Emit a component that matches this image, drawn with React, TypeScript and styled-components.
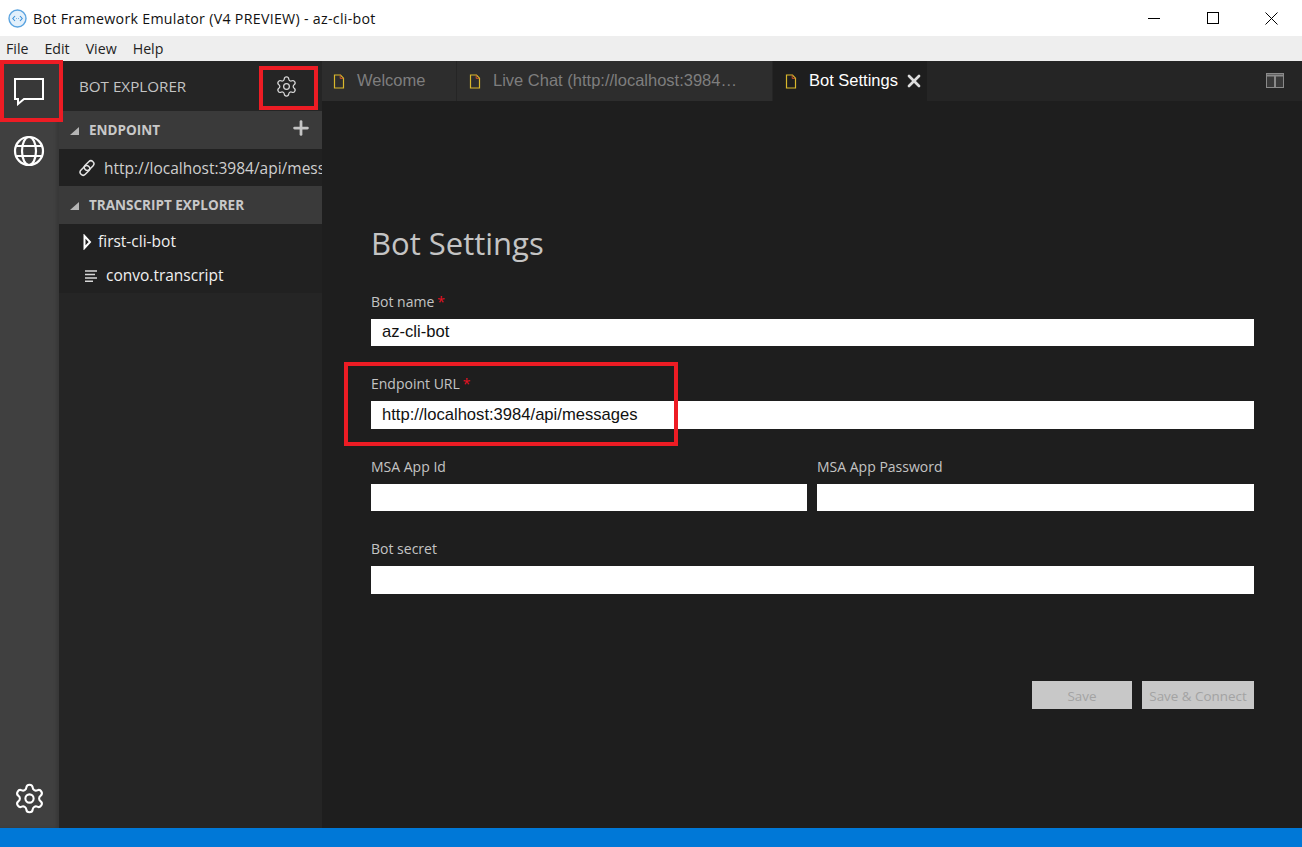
import { Settings, Plus, X } from "lucide-react";
import styled, { createGlobalStyle } from "styled-components";

const Global = createGlobalStyle`
  html, body { margin: 0; padding: 0; background: #1e1e1e; }
  * { box-sizing: border-box; }
`;

const UI_FONT = `"Open Sans", "Noto Sans", sans-serif`;
const ARIAL = `"Liberation Sans", Arial, sans-serif`;

const Window = styled.div`
  width: 1302px;
  height: 847px;
  display: flex;
  flex-direction: column;
  overflow: hidden;
  position: relative;
  font-family: ${UI_FONT};
`;

const TitleBar = styled.div`
  height: 36px;
  background: #fff;
  display: flex;
  align-items: center;
  padding: 0 1px 0 8px;
  color: #111;
  font-size: 14.2px;
  letter-spacing: 0.3px;
`;

const TitleText = styled.span`
  margin-left: 6px;
  flex: 1;
`;

const WinButton = styled.div`
  width: 59px;
  height: 36px;
  display: flex;
  align-items: center;
  justify-content: center;
`;

const MenuBar = styled.div`
  height: 25px;
  background: #eeeeee;
  display: flex;
  align-items: center;
  padding-left: 6px;
  gap: 16px;
  font-size: 14.2px;
  color: #222;
`;

const Body = styled.div`
  flex: 1;
  display: flex;
  min-height: 0;
`;

const NavBar = styled.div`
  width: 59px;
  background: #404040;
  box-shadow: inset -3px 0 3px rgba(0, 0, 0, 0.12);
  display: flex;
  flex-direction: column;
  align-items: stretch;
`;

const NavItem = styled.div<{ $active?: boolean }>`
  height: 60px;
  padding-right: 1px;
  display: flex;
  align-items: center;
  justify-content: center;
  background: ${(x) => (x.$active ? "#383838" : "transparent")};
  color: #fff;
`;

const NavSpacer = styled.div`
  flex: 1;
`;

const Explorer = styled.div`
  width: 263px;
  background: #252525;
  display: flex;
  flex-direction: column;
  overflow: hidden;
`;

const ExplorerHead = styled.div`
  height: 50px;
  flex: none;
  background: #252525;
  display: flex;
  align-items: center;
  justify-content: space-between;
  padding: 0 24px 0 20px;
  color: #c4c4c4;
  font-size: 15.2px;
`;

const SectionHead = styled.div`
  height: 38px;
  flex: none;
  background: #3a3a3a;
  display: flex;
  align-items: center;
  padding: 0 11px;
  color: #c8c8c8;
  font-size: 13.5px;
  font-weight: 700;
  text-transform: uppercase;
`;

const Caret = styled.span`
  width: 0;
  height: 0;
  margin: 2px 10px 0 0;
  border-style: solid;
  border-width: 0 0 8px 9px;
  border-color: transparent transparent #b5b5b5 transparent;
`;

const SectionName = styled.span`
  flex: 1;
  margin-top: -1px;
`;

const Row = styled.div<{ $indent: number; $height: number; $color: string }>`
  height: ${(x) => x.$height}px;
  flex: none;
  background: #212121;
  display: flex;
  align-items: center;
  padding-left: ${(x) => x.$indent}px;
  color: ${(x) => x.$color};
  font-size: 15.5px;
  white-space: nowrap;
`;

const RowLabel = styled.span<{ $lift: number }>`
  margin-top: -${(x) => x.$lift}px;
`;

const RowIcon = styled.svg<{ $gap: number }>`
  flex: none;
  margin-right: ${(x) => x.$gap}px;
`;

const Main = styled.div`
  flex: 1;
  background: #1e1e1e;
  display: flex;
  flex-direction: column;
  min-width: 0;
`;

const TabBar = styled.div`
  height: 40px;
  background: #252525;
  display: flex;
  align-items: stretch;
`;

const Tab = styled.div<{ $active?: boolean; $width: number; $pad: number }>`
  width: ${(x) => x.$width}px;
  background: ${(x) => (x.$active ? "#1e1e1e" : "#2d2d2d")};
  border-right: 1px solid #252525;
  display: flex;
  align-items: center;
  padding-left: ${(x) => x.$pad}px;
  gap: 12px;
  color: ${(x) => (x.$active ? "#fff" : "#7e7e7e")};
  font-family: ${ARIAL};
  font-size: 16.5px;
  white-space: nowrap;
`;

const TabText = styled.span`
  margin-top: -2px;
`;

const TabClose = styled(X)`
  flex: none;
  margin-left: -6px;
`;

const TabSpacer = styled.div`
  flex: 1;
`;

const SplitButton = styled.div`
  width: 54px;
  display: flex;
  align-items: center;
  justify-content: center;
`;

const Form = styled.div`
  flex: 1;
  padding: 120.5px 48px 0 49px;
  display: flex;
  flex-direction: column;
`;

const Heading = styled.h1`
  margin: 0 0 27px;
  height: 43px;
  line-height: 43px;
  font-size: 31px;
  font-weight: 400;
  color: #c4c4c4;
`;

const Field = styled.div`
  display: flex;
  flex-direction: column;
  min-width: 0;
  margin-bottom: 28px;
`;

const Label = styled.label`
  height: 20px;
  line-height: 20px;
  margin-bottom: 7px;
  font-size: 14px;
  color: #c4c4c4;
`;

const Star = styled.span`
  color: #e81123;
  margin-left: 3px;
`;

const Input = styled.input`
  height: 27.5px;
  width: 100%;
  padding: 0 11px;
  border: none;
  outline: none;
  border-radius: 0;
  background: #fff;
  color: #111;
  font-family: ${ARIAL};
  font-size: 16.6px;
`;

const Pair = styled.div`
  display: grid;
  grid-template-columns: 436px 1fr;
  gap: 10px;
`;

const Actions = styled.div`
  margin-top: 59.5px;
  display: flex;
  justify-content: flex-end;
  gap: 10px;
`;

const FormButton = styled.button<{ $width: number }>`
  width: ${(x) => x.$width}px;
  height: 28px;
  padding: 1px 0 0;
  border: none;
  background: #c8c8c8;
  color: #a3a3a3;
  font-family: ${UI_FONT};
  font-size: 13.4px;
`;

const StatusBar = styled.div`
  height: 19px;
  flex: none;
  background: #0078d7;
`;

const Callout = styled.div<{ $l: number; $t: number; $w: number; $h: number }>`
  position: absolute;
  left: ${(x) => x.$l}px;
  top: ${(x) => x.$t}px;
  width: ${(x) => x.$w}px;
  height: ${(x) => x.$h}px;
  border: 4px solid #ed1c24;
  pointer-events: none;
`;

const AppLogo = () => (
  <svg width="19" height="19" viewBox="0 0 19 19" fill="none">
    <circle cx="9.5" cy="9.5" r="8.5" fill="#e3f0fb" stroke="#5ba4e0" strokeWidth="1.4" />
    <path d="M7 7 4.800 9.500 7 12M12 7l2.200 2.500L12 12" stroke="#3a8fd8" strokeWidth="1.1" />
    <path d="M8.400 9.500h.6M10 9.500h.6" stroke="#3a8fd8" strokeWidth="1.1" />
  </svg>
);

const FileIcon = () => (
  <svg width="12" height="15" viewBox="0 0 12 15" fill="none" style={{ flex: "none" }}>
    <path d="M1.500 1h6l3 3.200V14h-9z" stroke="#d9b82c" strokeWidth="1.2" />
    <path d="M7.200 1.200v3.200h3" stroke="#c9562c" strokeWidth="1" />
  </svg>
);

const fields = { bot: "az-cli-bot", url: "http://localhost:3984/api/messages" };

export default function App() {
  return (
    <Window>
      <Global />
      <TitleBar>
        <AppLogo />
        <TitleText>Bot Framework Emulator (V4 PREVIEW) - az-cli-bot</TitleText>
        <WinButton>
          <svg width="12" height="12" viewBox="0 0 12 12"><path d="M0 6.500h12" stroke="#000" /></svg>
        </WinButton>
        <WinButton>
          <svg width="12" height="12" viewBox="0 0 12 12"><rect x=".5" y=".5" width="11" height="11" fill="none" stroke="#000" /></svg>
        </WinButton>
        <WinButton>
          <svg width="13" height="13" viewBox="0 0 13 13"><path d="M.5.5l12 12M12.500.5l-12 12" stroke="#000" /></svg>
        </WinButton>
      </TitleBar>
      <MenuBar>
        <span>File</span>
        <span>Edit</span>
        <span>View</span>
        <span>Help</span>
      </MenuBar>
      <Body>
        <NavBar>
          <NavItem $active>
            <svg width="32" height="30" viewBox="0 0 32 30" fill="none">
              <path d="M2 3h28v20H11l-6 5v-5H2z" stroke="#fff" strokeWidth="2" />
            </svg>
          </NavItem>
          <NavItem>
            <svg width="32" height="32" viewBox="0 0 32 32" fill="none" stroke="#fff" strokeWidth="2.200">
              <circle cx="16" cy="16" r="14" />
              <ellipse cx="16" cy="16" rx="7" ry="14" />
              <path d="M3.500 11h25M3.500 21h25" />
            </svg>
          </NavItem>
          <NavSpacer />
          <NavItem>
            <Settings size={33} strokeWidth={1.5} />
          </NavItem>
        </NavBar>
        <Explorer>
          <ExplorerHead>
            <span>BOT EXPLORER</span>
            <Settings size={23} strokeWidth={1.3} color="#d8d8d8" />
          </ExplorerHead>
          <SectionHead>
            <Caret />
            <SectionName>Endpoint</SectionName>
            <Plus size={22} strokeWidth={3} color="#c4c4c4" style={{ marginRight: "-1px", marginTop: "-4px" }} />
          </SectionHead>
          <Row $indent={19} $height={37} $color="#cfcfcf">
            <RowIcon $gap={8} width="18" height="18" viewBox="0 0 18 18" fill="none" stroke="#e4e4e4" strokeWidth="1.5">
              <rect x="8.100" y="1" width="6" height="11" rx="3" transform="rotate(45 11 6.500)" />
              <rect x="3.900" y="6" width="6" height="11" rx="3" transform="rotate(45 7 11.500)" />
            </RowIcon>
            <RowLabel $lift={0}>http://localhost:3984/api/messages</RowLabel>
          </Row>
          <SectionHead>
            <Caret />
            <SectionName>Transcript Explorer</SectionName>
          </SectionHead>
          <Row $indent={24} $height={35} $color="#f0f0f0">
            <RowIcon $gap={6} width="9" height="16" viewBox="0 0 9 16" fill="none" stroke="#fff" strokeWidth="2">
              <path d="M1.500 2v12l5.500-6z" />
            </RowIcon>
            <RowLabel $lift={2}>first-cli-bot</RowLabel>
          </Row>
          <Row $indent={26} $height={34} $color="#f0f0f0">
            <RowIcon $gap={8} width="13" height="12" viewBox="0 0 13 12" fill="none" stroke="#d8d8d8" strokeWidth="1.6">
              <path d="M0 1h12M0 4.500h10M0 8h12M0 11.300h8" />
            </RowIcon>
            <RowLabel $lift={2}>convo.transcript</RowLabel>
          </Row>
        </Explorer>
        <Main>
          <TabBar>
            <Tab $width={135} $pad={11}>
              <FileIcon />
              <TabText>Welcome</TabText>
            </Tab>
            <Tab $width={316} $pad={12}>
              <FileIcon />
              <TabText>Live Chat (http://localhost:3984…</TabText>
            </Tab>
            <Tab $active $width={155} $pad={12}>
              <FileIcon />
              <TabText>Bot Settings</TabText>
              <TabClose size={20} strokeWidth={3.2} color="#ddd" />
            </Tab>
            <TabSpacer />
            <SplitButton>
              <svg width="18" height="16" viewBox="0 0 18 16" fill="none">
                <rect x=".5" y=".5" width="17" height="14" fill="#3a3a3a" stroke="#8a8a8a" />
                <path d="M0 2.500h18M9 2v13" stroke="#8a8a8a" strokeWidth="2" />
              </svg>
            </SplitButton>
          </TabBar>
          <Form>
            <Heading>Bot Settings</Heading>
            <Field>
              <Label>Bot name<Star>*</Star></Label>
              <Input readOnly value={fields.bot} />
            </Field>
            <Field>
              <Label>Endpoint URL<Star>*</Star></Label>
              <Input readOnly value={fields.url} />
            </Field>
            <Pair>
              <Field>
                <Label>MSA App Id</Label>
                <Input readOnly value="" />
              </Field>
              <Field>
                <Label>MSA App Password</Label>
                <Input readOnly value="" />
              </Field>
            </Pair>
            <Field>
              <Label>Bot secret</Label>
              <Input readOnly value="" />
            </Field>
            <Actions>
              <FormButton $width={100}>Save</FormButton>
              <FormButton $width={112}>Save &amp; Connect</FormButton>
            </Actions>
          </Form>
        </Main>
      </Body>
      <StatusBar />
      <Callout $l={0} $t={60} $w={63} $h={62} />
      <Callout $l={259} $t={66} $w={59} $h={44} />
      <Callout $l={344} $t={362} $w={334} $h={84} />
    </Window>
  );
}
